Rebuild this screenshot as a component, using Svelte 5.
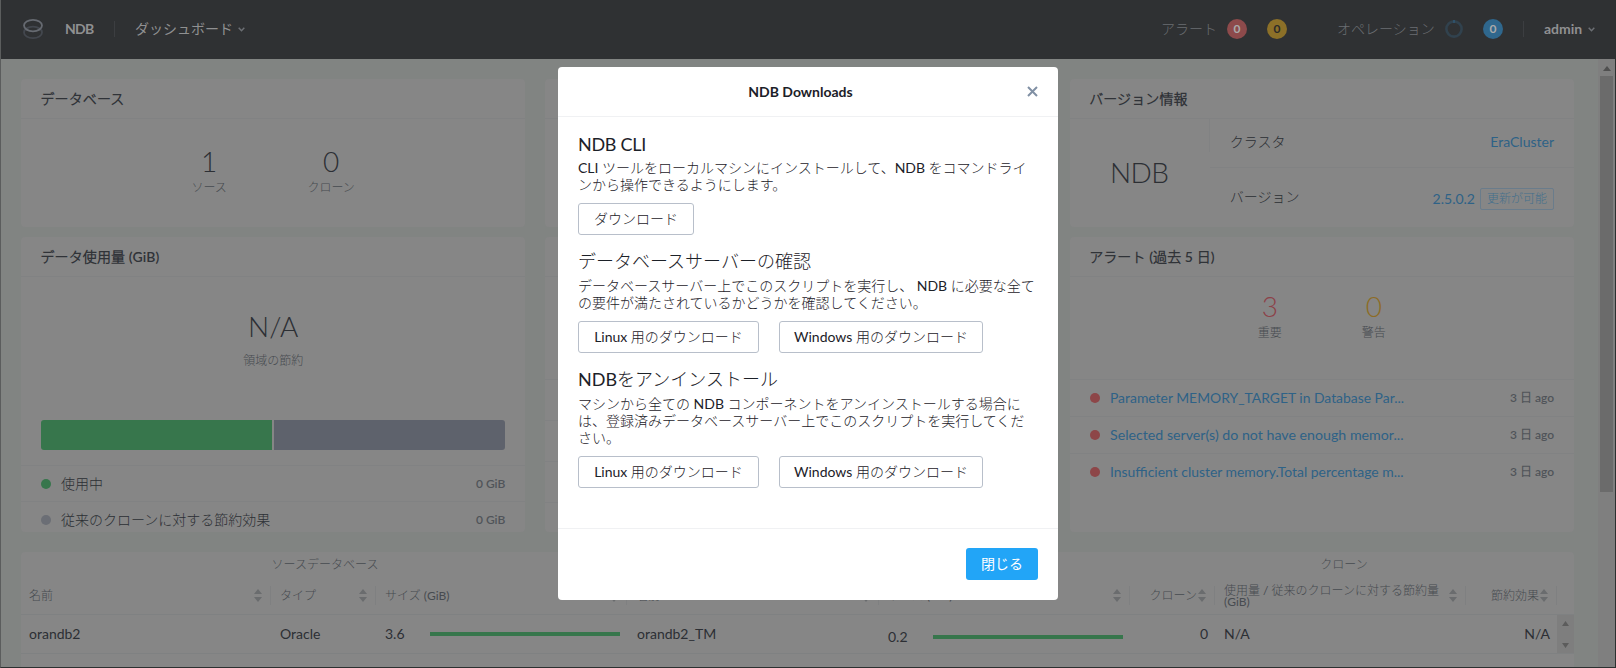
<script>
  const alerts = [
    'Parameter MEMORY_TARGET in Database Par...',
    'Selected server(s) do not have enough memor...',
    'Insufficient cluster memory.Total percentage m...'
  ];
  const widths = [294, 293.5, 293.5];
  const sections = [
    { title: 'NDB CLI', lines: ['CLI ツールをローカルマシンにインストールして、NDB をコマンドライ', 'ンから操作できるようにします。'], buttons: [['ダウンロード', 116]] },
    { title: 'データベースサーバーの確認', lines: ['データベースサーバー上でこのスクリプトを実行し、 NDB に必要な全て', 'の要件が満たされているかどうかを確認してください。'], buttons: [['Linux 用のダウンロード', 181], ['Windows 用のダウンロード', 204]] },
    { title: 'NDBをアンインストール', lines: ['マシンから全ての NDB コンポーネントをアンインストールする場合に', 'は、登録済みデータベースサーバー上でこのスクリプトを実行してくだ', 'さい。'], buttons: [['Linux 用のダウンロード', 181], ['Windows 用のダウンロード', 204]] }
  ];
</script>

{#snippet sort()}
  <svg class="sort" width="8" height="13" viewBox="0 0 8 13"><path d="M4 0 8 5H0zM4 13 0 8H8z" /></svg>
{/snippet}
{#snippet chevron()}
  <svg class="chev" width="7" height="5" viewBox="0 0 7 5"><path d="M.7.7 3.5 3.7 6.3.7" /></svg>
{/snippet}

<div class="app">
  <header class="top">
    <svg class="logo" width="20" height="20" viewBox="0 0 20 20" fill="none" stroke-width="1.8">
      <ellipse cx="10" cy="13.4" rx="9" ry="5.7" stroke="#43474e" />
      <ellipse cx="10" cy="6.6" rx="9" ry="5.7" stroke="#666a71" />
    </svg>
    <b class="brand">NDB</b>
    <i class="vr"></i>
    <span class="page">ダッシュボード</span>{@render chevron()}
    <div class="right">
      <span class="dim">アラート</span><b class="pill red">0</b><b class="pill yellow">0</b>
      <span class="dim ops">オペレーション</span>
      <svg class="ring" width="18" height="18" viewBox="0 0 18 18" fill="none" stroke-width="2.6"><circle cx="9" cy="9" r="7.6" stroke="#31424e" /><path d="M9 0v3" stroke="#2f6388" stroke-width="1" /></svg>
      <b class="pill blue">0</b>
      <i class="vr"></i>
      <b class="admin">admin</b>{@render chevron()}
    </div>
  </header>

  <div class="view">
    <main>
      <div class="cards">
        <section class="card">
          <h2>データベース</h2>
          <div class="stats db">
            <div><strong>1</strong><small>ソース</small></div>
            <div><strong>0</strong><small>クローン</small></div>
          </div>
        </section>
        <section class="card"><h2></h2></section>
        <section class="card">
          <h2>バージョン情報</h2>
          <div class="version">
            <div class="product">NDB</div>
            <i class="short"></i>
            <div class="facts">
              <div class="fact"><span>クラスタ</span><a>EraCluster</a></div>
              <div class="fact second"><span>バージョン</span><a class="num">2.5.0.2</a><em>更新が可能</em></div>
            </div>
          </div>
        </section>
        <section class="card">
          <h2>データ使用量 (GiB)</h2>
          <div class="saving"><strong>N/A</strong><small>領域の節約</small></div>
          <div class="usage"><i></i><i></i></div>
          <div class="legend"><i class="dot green"></i><span>使用中</span><b>0 GiB</b></div>
          <div class="legend"><i class="dot grey"></i><span>従来のクローンに対する節約効果</span><b>0 GiB</b></div>
        </section>
        <section class="card">
          <h2></h2>
          <div class="blank first"></div><div class="blank"></div><div class="blank"></div><div class="blank"></div>
        </section>
        <section class="card">
          <h2>アラート (過去 5 日)</h2>
          <div class="stats al">
            <div><strong class="crit">3</strong><small>重要</small></div>
            <div><strong class="warn">0</strong><small>警告</small></div>
          </div>
          {#each alerts as a, n}
            <div class="alert"><i class="dot redd"></i><svg width="296" height="20"><text x="0" y="15" textLength={widths[n]} lengthAdjust="spacingAndGlyphs">{a}</text></svg><b>3 日 ago</b></div>
          {/each}
        </section>
      </div>

      <div class="table">
        <div class="groups"><span>ソースデータベース</span><span></span><span>クローン</span><span></span></div>
        <div class="grid head">
          <div>名前{@render sort()}</div>
          <div>タイプ{@render sort()}</div>
          <div>サイズ (GiB){@render sort()}</div>
          <div>名前{@render sort()}</div>
          <div>サイズ (GiB){@render sort()}</div>
          <div class="end">クローン{@render sort()}</div>
          <div><span class="two">使用量 / 従来のクローンに対する節約量<br />(GiB)</span>{@render sort()}</div>
          <div class="end">節約効果{@render sort()}</div>
        </div>
        <div class="grid row">
          <div>orandb2</div>
          <div>Oracle</div>
          <div>3.6<i class="bar"></i></div>
          <div class="tm">orandb2_TM</div>
          <div class="low">0.2<i class="bar"></i></div>
          <div class="end">0</div>
          <div>N/A</div>
          <div class="end">N/A</div>
          <div class="mini"><svg width="7" height="27" viewBox="0 0 7 27"><path d="M3.5 0 7 5H0zM3.5 27 0 22H7z" /></svg></div>
        </div>
      </div>
    </main>
    <aside><svg width="8" height="5" viewBox="0 0 8 5"><path d="M4 0 8 5H0z" /></svg><i></i></aside>
  </div>

  <div class="layer">
    <div class="modal">
      <div class="mhead"><b>NDB Downloads</b><svg width="11" height="11" viewBox="0 0 11 11"><path d="M1 1l9 9M10 1 1 10" /></svg></div>
      <div class="mbody">
        {#each sections as s}
          <section>
            <h3>{s.title}</h3>
            <p>{#each s.lines as l}<span>{l}</span>{/each}</p>
            <div class="btns">{#each s.buttons as b}<button style="width:{b[1]}px">{b[0]}</button>{/each}</div>
          </section>
        {/each}
      </div>
      <div class="mfoot"><button>閉じる</button></div>
    </div>
  </div>
</div>

<style>
  :global(body) { margin: 0; background: #828482; }
  * { box-sizing: border-box; }
  .app { position: relative; width: 1616px; height: 668px; overflow: hidden; background: #818482; color: #2c2f34; border: solid #2c3030; border-width: 0 1px 1px 0; border-left: 1px solid #5b5d5d; font: 400 14px/20px Lato, "Noto Sans CJK JP Light", "Noto Sans CJK JP", sans-serif; white-space: nowrap; }
  b { font-weight: 700; }
  i { font-style: normal; display: block; flex: none; }
  svg { flex: none; display: block; }
  .top { height: 59px; background: #2f3133; display: flex; align-items: center; padding: 0 20px 1px 22px; color: #8f9091; }
  .brand { margin-left: 22px; width: 29px; letter-spacing: -.7px; }
  .vr { width: 1px; height: 16px; background: #3c3e41; margin-left: 20px; }
  .page { margin-left: 20px; width: 99px; font-family: Lato, "Noto Sans CJK JP", sans-serif; }
  .chev { margin-left: 4px; fill: none; stroke: #6c6f74; stroke-width: 1.5; }
  .right { margin-left: auto; display: flex; align-items: center; }
  .dim { color: #6b6e72; width: 56px; margin-right: 10px; }
  .ops { width: 98px; margin: 0 10px 0 50px; }
  .pill { width: 20px; height: 20px; border-radius: 50%; text-align: center; font-size: 12px; color: #aaa; }
  .red { background: #8d4a4b; }
  .yellow { background: #8c7028; color: #2b2a28; margin-left: 20px; }
  .blue { background: #2f678d; margin-left: 20px; }
  .admin { margin-left: 20px; width: 39px; }
  .right .chev { margin-left: 5px; }
  .view { display: flex; height: 608px; }
  main { flex: 1; padding: 20px 24px 0 20px; overflow: hidden; }
  aside { width: 17px; background: #7f7f7f; display: flex; flex-direction: column; align-items: center; padding-top: 7px; }
  aside svg { fill: #505050; margin-bottom: 5px; }
  aside i { width: 13px; height: 416px; background: #6b6b6b; }
  .cards { display: grid; grid-template-columns: repeat(3, 1fr); grid-template-rows: 148px 295px; gap: 10px 20px; }
  .card { background: #868686; border-radius: 4px; overflow: hidden; }
  h2 { margin: 0; height: 40px; padding: 0 20px 0 19.5px; line-height: 39px; font-size: 14px; font-weight: 600; letter-spacing: .1px; color: #303338; border-bottom: 1px solid #818283; }
  strong { display: block; font-size: 28px; line-height: 30px; font-weight: 300; }
  small { display: block; font-size: 12px; line-height: 16px; color: #474b50; }
  .stats { display: flex; justify-content: center; text-align: center; }
  .stats div { width: 122px; }
  .db { padding: 27px 6px 0 0; }
  .db small { margin-top: 4px; }
  .al { height: 102px; padding-top: 14px; }
  .al div { width: 104px; }
  .al small { margin-top: 4px; }
  .crit { color: #8d4148; }
  .warn { color: #8d6c25; }
  .version { display: flex; height: 108px; }
  .product { width: 139px; text-align: center; padding: 33px 0 0; font-size: 28px; font-weight: 300; line-height: 40px; letter-spacing: -.6px; }
  .short { width: 1px; height: 33px; background: #818283; }
  .facts { flex: 1; }
  .fact { display: flex; align-items: center; height: 49px; padding: 0 20px 2px; border-bottom: 1px solid #818283; }
  .fact span { margin-right: auto; }
  .second { height: 59px; border: 0; padding: 2px 20px 0; }
  .second span { padding-bottom: 3px; }
  a { color: #2e6287; }
  em { font-style: normal; font-size: 12px; line-height: 20px; color: #436f8c; border: 1px solid #6a7c8b; border-radius: 2px; width: 74px; text-align: center; margin-left: 5px; }
  .saving { height: 143px; padding-top: 34px; text-align: center; }
  .saving small { margin-top: 12px; }
  .usage { display: flex; gap: 2px; margin: 0 20px 15px; height: 30px; border-radius: 3px; overflow: hidden; }
  .usage i { flex: 1; background: #37764c; }
  .usage i + i { background: #5e626c; }
  .legend, .alert { display: flex; align-items: center; height: 36px; border-top: 1px solid #818283; padding: 0 20px; }
  .legend span { margin-left: 10px; }
  .legend b, .alert b { margin-left: auto; font-size: 12px; font-weight: 600; color: #505459; }
  .alert { height: 37px; }
  .alert svg { margin-left: 10px; overflow: visible; }
  .alert text { fill: #2e6287; }
  .dot { width: 10px; height: 10px; border-radius: 50%; }
  .green { background: #37764c; }
  .grey { background: #6b6e75; }
  .redd { background: #8d4648; }
  .blank { height: 41px; border-top: 1px solid #818283; }
  .first { margin-top: 102px; }
  .table { margin-top: 20px; height: 140px; background: #868686; border-radius: 4px; }
  .groups { display: grid; grid-template-columns: 608px 588px 342px 17px; height: 26px; line-height: 26px; text-align: center; font-size: 12px; color: #474b50; }
  .groups span:nth-child(3) { padding-right: 88px; }
  .grid { display: grid; grid-template-columns: 250px 105px 251px 252px 251px 85px 251px 91px 17px; }
  .grid > div { display: flex; align-items: center; }
  .head { height: 37px; font-size: 12px; color: #474b50; border-bottom: 1px solid #7f8182; }
  .head > div { height: 19px; margin-top: 8px; border-right: 1px solid #7f8081; padding: 0 8px 0 9px; justify-content: space-between; }
  .head > div:first-child, .row > div:first-child { padding-left: 8px; }
  .head > .end { justify-content: flex-end; gap: 1px; }
  .two { line-height: 11px; }
  .sort { fill: #6a6c6e; }
  .row { height: 39px; border-bottom: 1px solid #7f8182; }
  .row > div { padding-left: 9px; }
  .row > .tm { padding-left: 10px; }
  .row > .end { justify-content: flex-end; padding-right: 7px; }
  .row > .low { padding-top: 5px; }
  .bar { width: 190px; height: 4px; margin-left: auto; margin-right: 7px; background: #37764c; }
  .row > .mini { background: #7e7e7e; padding: 0; justify-content: center; }
  .mini svg { fill: #5c5c5c; }
  .layer { position: absolute; inset: 0; padding: 67px 0 0 557px; }
  .modal { width: 500px; height: 533px; background: #fff; border-radius: 4px; color: #1c2128; display: flex; flex-direction: column; }
  .mhead { height: 50px; border-bottom: 1px solid #f0f1f3; display: flex; align-items: center; justify-content: flex-end; padding: 0 20px; }
  .mhead b { flex: 1; text-align: center; padding-right: 4px; }
  .mhead svg { stroke: #8090a4; stroke-width: 2; fill: none; }
  .mbody { flex: 1; padding: 18px 20px 0; }
  h3 { margin: 0; font-size: 18px; line-height: 18px; font-weight: 400; }
  p { margin: 7px 0 10px; line-height: 17px; }
  p span { display: block; height: 17px; }
  .mbody section { margin-bottom: 17px; }
  .mbody section:first-child p { margin: 6px 0 10px; }
  .mbody section:first-child h3 { letter-spacing: -.3px; }
  .btns { display: flex; gap: 20px; }
  button { font: inherit; font-size: 14px; line-height: 28px; height: 32px; padding: 0; border: 1px solid #b8bfca; border-radius: 3px; background: #fff; color: #1c2128; }
  .mfoot { height: 72px; border-top: 1px solid #f0f1f3; padding: 19px 20px; text-align: right; }
  .mfoot button { width: 72px; background: #22a5f7; border: 0; color: #fff; font-family: Lato, "Noto Sans CJK JP", sans-serif; }
</style>
